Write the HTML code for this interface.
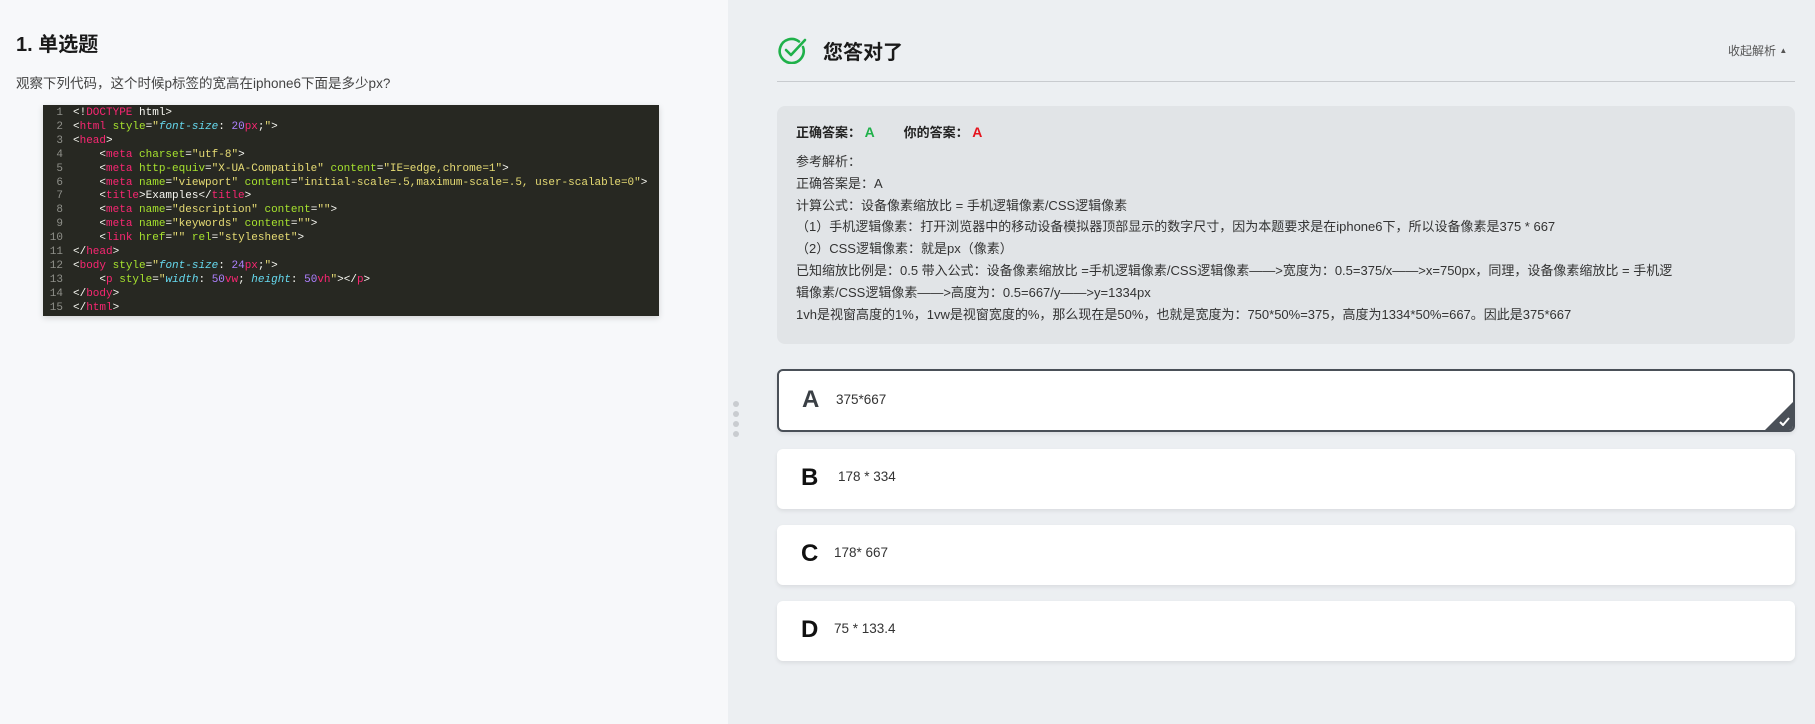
<!DOCTYPE html>
<html><head><meta charset="utf-8"><style>
*{margin:0;padding:0;box-sizing:border-box}
body{width:1815px;height:724px;overflow:hidden;font-family:"Liberation Sans","Noto Sans CJK SC",sans-serif;color:#333;position:relative;background:#eceff2}
#left{position:absolute;left:0;top:0;width:728px;height:724px;background:#f7f8fa}
h1{position:absolute;left:16px;top:28px;font-size:20px;font-weight:bold;color:#1a1a1a}
.q{position:absolute;left:16px;top:72px;font-size:13.5px;color:#444}
.code{position:absolute;left:43px;top:105px;width:616px;height:211px;background:#272822;box-shadow:0 2px 6px rgba(0,0,0,.15);font-family:"Liberation Mono",monospace;font-size:11px;line-height:13.9px;color:#f8f8f2;padding-top:2px;white-space:pre}
.code .ln{position:absolute;left:0;top:2px;width:20px;text-align:right;color:#8f908a}
.code .tx{position:absolute;left:30px;top:2px}
.t{color:#f92672}.a{color:#a6e22e}.s{color:#e6db74}.i{color:#66d9ef;font-style:italic}.n{color:#ae81ff}
.ok{position:absolute;left:778px;top:37px}
.title{position:absolute;left:823px;top:36px;font-size:20px;font-weight:bold;color:#1a1a1a}
.fold{position:absolute;left:1728px;top:42px;font-size:12px;color:#555}
.hr{position:absolute;left:777px;top:81px;width:1018px;height:1px;background:#c8cbcf}
.box{position:absolute;left:777px;top:106px;width:1018px;height:238px;background:#e1e4e7;border-radius:8px}
.ans{position:absolute;left:19px;top:16px;font-size:13px;font-weight:bold;color:#222}
.exp{position:absolute;left:19px;top:45px;font-size:13px;line-height:21.8px;color:#333}
.opt{position:absolute;left:777px;width:1018px;height:60px;background:#fff;border-radius:6px;box-shadow:0 2px 4px rgba(0,0,0,.08)}
.opt b{position:absolute;left:24px;top:15px;font-size:24px;color:#111}
.opt span{position:absolute;top:20px;font-size:13.5px;color:#333}
.sel{border:2px solid #4a5058;overflow:hidden}
.dots{position:absolute;left:733px;top:401px}
.dots i{display:block;width:6px;height:6px;border-radius:3px;background:#c9ccd0;margin-bottom:4px}
</style></head><body>
<div id="left">
<h1>1. 单选题</h1>
<div class="q">观察下列代码，这个时候p标签的宽高在iphone6下面是多少px?</div>
<div class="code"><div class="ln">1
2
3
4
5
6
7
8
9
10
11
12
13
14
15</div><div class="tx">&lt;!<span class="t">DOCTYPE</span> html&gt;
&lt;<span class="t">html</span> <span class="a">style</span>=<span class="s">"</span><span class="i">font-size</span>: <span class="n">20</span><span class="t">px</span>;<span class="s">"</span>&gt;
&lt;<span class="t">head</span>&gt;
    &lt;<span class="t">meta</span> <span class="a">charset</span>=<span class="s">"utf-8"</span>&gt;
    &lt;<span class="t">meta</span> <span class="a">http-equiv</span>=<span class="s">"X-UA-Compatible"</span> <span class="a">content</span>=<span class="s">"IE=edge,chrome=1"</span>&gt;
    &lt;<span class="t">meta</span> <span class="a">name</span>=<span class="s">"viewport"</span> <span class="a">content</span>=<span class="s">"initial-scale=.5,maximum-scale=.5, user-scalable=0"</span>&gt;
    &lt;<span class="t">title</span>&gt;Examples&lt;/<span class="t">title</span>&gt;
    &lt;<span class="t">meta</span> <span class="a">name</span>=<span class="s">"description"</span> <span class="a">content</span>=<span class="s">""</span>&gt;
    &lt;<span class="t">meta</span> <span class="a">name</span>=<span class="s">"keywords"</span> <span class="a">content</span>=<span class="s">""</span>&gt;
    &lt;<span class="t">link</span> <span class="a">href</span>=<span class="s">""</span> <span class="a">rel</span>=<span class="s">"stylesheet"</span>&gt;
&lt;/<span class="t">head</span>&gt;
&lt;<span class="t">body</span> <span class="a">style</span>=<span class="s">"</span><span class="i">font-size</span>: <span class="n">24</span><span class="t">px</span>;<span class="s">"</span>&gt;
    &lt;<span class="t">p</span> <span class="a">style</span>=<span class="s">"</span><span class="i">width</span>: <span class="n">50</span><span class="t">vw</span>; <span class="i">height</span>: <span class="n">50</span><span class="t">vh</span><span class="s">"</span>&gt;&lt;/<span class="t">p</span>&gt;
&lt;/<span class="t">body</span>&gt;
&lt;/<span class="t">html</span>&gt;</div></div>
</div>
<svg class="ok" width="30" height="27" viewBox="0 0 30 27"><path d="M21 4.5A12 12 0 1 0 25 10" fill="none" stroke="#1fb14a" stroke-width="2.6" stroke-linecap="round"/><path d="M8 13l5 5L27 3" fill="none" stroke="#1fb14a" stroke-width="2.6" stroke-linecap="round" stroke-linejoin="round"/></svg>
<div class="title">您答对了</div>
<div class="fold">收起解析 <span style="font-size:8px;vertical-align:2px">▲</span></div>
<div class="hr"></div>
<div class="box">
<div class="ans">正确答案： <span style="color:#1fb14a;font-size:14px">A</span>&nbsp;&nbsp;&nbsp;&nbsp;&nbsp;&nbsp;&nbsp;&nbsp;你的答案： <span style="color:#e5141e;font-size:14px">A</span></div>
<div class="exp">参考解析：<br>正确答案是：A<br>计算公式：设备像素缩放比 = 手机逻辑像素/CSS逻辑像素<br>（1）手机逻辑像素：打开浏览器中的移动设备模拟器顶部显示的数字尺寸，因为本题要求是在iphone6下，所以设备像素是375 * 667<br>（2）CSS逻辑像素：就是px（像素）<br>已知缩放比例是：0.5 带入公式：设备像素缩放比 =手机逻辑像素/CSS逻辑像素——&gt;宽度为：0.5=375/x——&gt;x=750px，同理，设备像素缩放比 = 手机逻<br>辑像素/CSS逻辑像素——&gt;高度为：0.5=667/y——&gt;y=1334px<br>1vh是视窗高度的1%，1vw是视窗宽度的%，那么现在是50%，也就是宽度为：750*50%=375，高度为1334*50%=667。因此是375*667</div>
</div>
<div class="dots"><i></i><i></i><i></i><i></i></div>
<div class="opt sel" style="top:369px;height:63px"><b style="left:23px;top:15px;color:#3a3f45">A</b><span style="left:57px;top:21px">375*667</span>
<div style="position:absolute;right:0;bottom:0;width:0;height:0;border-left:28px solid transparent;border-bottom:28px solid #4a5058"></div>
<svg style="position:absolute;right:3px;bottom:4px" width="11" height="9" viewBox="0 0 11 9"><path d="M1 5l3 3 6-7" fill="none" stroke="#fff" stroke-width="2"/></svg></div>
<div class="opt" style="top:449px"><b>B</b><span style="left:61px">178 * 334</span></div>
<div class="opt" style="top:525px"><b>C</b><span style="left:57px">178* 667</span></div>
<div class="opt" style="top:601px"><b>D</b><span style="left:57px">75 * 133.4</span></div>
</body></html>
